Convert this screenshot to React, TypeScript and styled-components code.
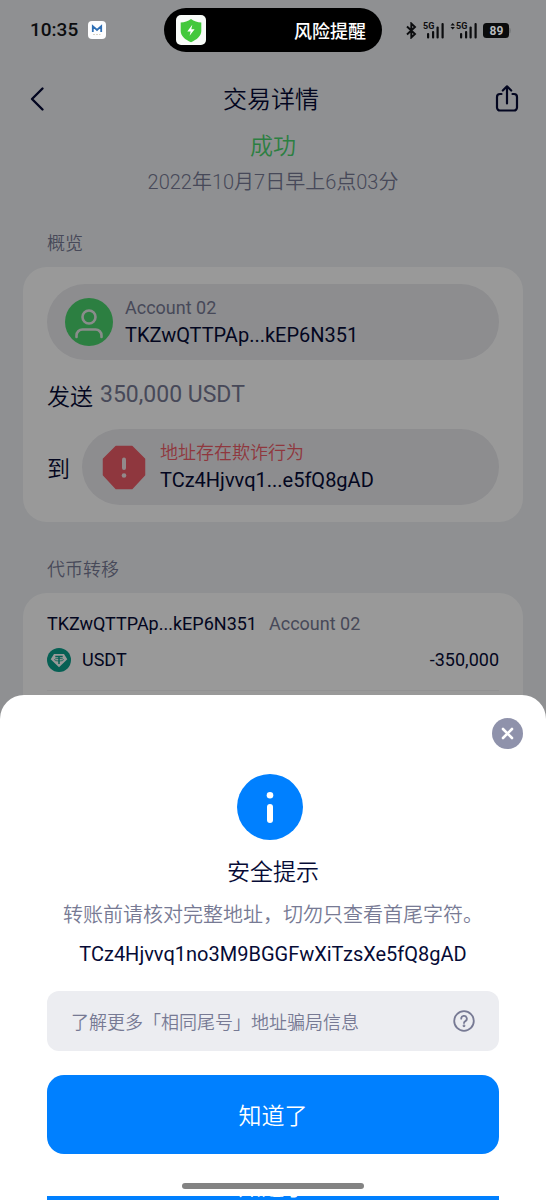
import React from "react";
import styled, { createGlobalStyle } from "styled-components";

const GlobalStyle = createGlobalStyle`
  * { box-sizing: border-box; }
  body {
    margin: 0;
    background: #eff1f4;
    color: #060b36;
    font-family: Roboto, "Noto Sans CJK SC", sans-serif;
    font-size: 18px;
  }
  button { font: inherit; color: inherit; border: 0; padding: 0; background: none; cursor: pointer; }
  h1, h2, p { margin: 0; font-weight: 400; }
  svg { display: block; flex: none; }
`;

const colors = {
  ink: "#060b36",
  muted: "#777a94",
  green: "#4ad46d",
  red: "#ef5d68",
  blue: "#0080ff",
  pill: "#ebebef",
};

const Page = styled.div`
  position: relative;
  height: 100vh;
  overflow: hidden;
`;

const StatusBar = styled.div`
  position: relative;
  z-index: 2;
  height: 60px;
  padding: 0 30px;
  display: grid;
  grid-template-columns: 1fr 218px 1fr;
  align-items: center;
  color: #0c0d0f;
`;

const StatusSide = styled.div<{ $end?: boolean }>`
  display: flex;
  align-items: center;
  justify-content: ${(p) => (p.$end ? "flex-end" : "flex-start")};
  gap: ${(p) => (p.$end ? 6 : 10)}px;
  padding-right: ${(p) => (p.$end ? 5 : 0)}px;
`;

const Clock = styled.span`
  font-size: 19px;
  font-weight: 500;
  line-height: 24px;
`;

const Island = styled.div`
  height: 44px;
  padding: 0 16px 0 12px;
  border-radius: 22px;
  background: #000;
  color: #fff;
  display: flex;
  align-items: center;
  justify-content: space-between;
  font-weight: 500;
`;

const Header = styled.header`
  height: 70px;
  padding: 0 24px;
  display: flex;
  align-items: center;
  justify-content: space-between;
  margin-top: 4px;
`;

const HeaderTitle = styled.h1`
  padding-top: 2px;
  font-size: 24px;
  font-weight: 350;
  line-height: 32px;
`;

const Summary = styled.div`
  display: flex;
  flex-direction: column;
  align-items: center;
`;

const Status = styled.p`
  font-size: 23px;
  font-weight: 350;
  line-height: 26px;
  color: ${colors.green};
`;

const Timestamp = styled.p`
  margin-top: 8px;
  font-size: 20px;
  font-weight: 350;
  line-height: 28px;
  color: ${colors.muted};
`;

const Section = styled.section`
  padding: 0 23px;
  margin-top: 35px;
`;

const SectionLabel = styled.h2`
  padding: 0 24px;
  font-size: 18px;
  font-weight: 350;
  line-height: 26px;
  color: ${colors.muted};
`;

const Card = styled.div<{ $continues?: boolean }>`
  margin-top: 10px;
  padding: 17px 24px ${(p) => (p.$continues ? 80 : 17)}px;
  border-radius: 24px;
  background: #fff;
`;

const AccountPill = styled.div`
  flex: 1;
  height: 76px;
  padding: 0 18px;
  border-radius: 38px;
  background: ${colors.pill};
  display: flex;
  align-items: center;
  gap: 12px;
`;

const AccountName = styled.div<{ $alert?: boolean }>`
  font-size: 18px;
  font-weight: ${(p) => (p.$alert ? 350 : 400)};
  line-height: 26px;
  color: ${(p) => (p.$alert ? colors.red : colors.muted)};
`;

const AccountAddress = styled.div`
  font-size: 20px;
  line-height: 28px;
`;

const AmountLine = styled.div`
  height: 69px;
  display: flex;
  align-items: center;
  gap: 7px;
  font-size: 23px;
`;

const Label = styled.span`
  font-weight: 350;
`;

const Amount = styled.span`
  color: ${colors.muted};
`;

const RecipientLine = styled.div`
  display: flex;
  align-items: center;
  gap: 12px;
  font-size: 23px;
`;

const TransferOwner = styled.div`
  display: flex;
  gap: 12px;
  line-height: 28px;
`;

const TransferRow = styled.div`
  margin-top: 10px;
  padding-bottom: 18px;
  border-bottom: 1px solid #f3f4f6;
  display: flex;
  align-items: center;
  gap: 11px;
  line-height: 24px;
`;

const TransferAmount = styled.span`
  margin-left: auto;
`;

const Backdrop = styled.div`
  position: absolute;
  inset: 0;
  z-index: 1;
  background: rgba(0, 0, 0, 0.4);
  display: flex;
  flex-direction: column;
  justify-content: flex-end;
`;

const Sheet = styled.div`
  padding: 23px 47px 0;
  border-radius: 24px 24px 0 0;
  background: #fff;
  display: flex;
  flex-direction: column;
  align-items: center;
`;

const CloseButton = styled.button`
  align-self: flex-end;
  margin-right: -24px;
  width: 31px;
  height: 31px;
  border-radius: 50%;
  background: #8f92ab;
  display: grid;
  place-items: center;
`;

const SheetIcon = styled.div`
  margin-top: 25px;
`;

const SheetTitle = styled.h2`
  margin-top: 17px;
  font-size: 23px;
  font-weight: 350;
  line-height: 32px;
`;

const SheetText = styled.p`
  margin-top: 12px;
  font-size: 20px;
  font-weight: 350;
  line-height: 28px;
  white-space: nowrap;
  color: ${colors.muted};
`;

const FullAddress = styled.p`
  margin-top: 11px;
  font-size: 20px;
  line-height: 28px;
`;

const LearnMore = styled.a`
  align-self: stretch;
  height: 60px;
  margin-top: 23px;
  padding: 0 24px;
  border-radius: 12px;
  background: #ecedf1;
  color: ${colors.muted};
  font-weight: 350;
  text-decoration: none;
  display: flex;
  align-items: center;
  justify-content: space-between;
`;

const ConfirmButton = styled.button`
  align-self: stretch;
  height: 79px;
  margin-top: 24px;
  padding-bottom: 2px;
  border-radius: 17px;
  background: ${colors.blue};
  color: #fff;
  font-size: 23px;
  font-weight: 350;
`;

const HomeIndicator = styled.div`
  width: 182px;
  height: 6px;
  margin-top: 29px;
  border-radius: 3px;
  background: #838383;
`;

const NextButton = styled.button`
  align-self: stretch;
  height: 4px;
  margin-top: 7px;
  overflow: hidden;
  background: ${colors.blue};
  color: #fff;
  font-size: 23px;
  font-weight: 350;
  line-height: 24px;
  display: flex;
  align-items: flex-end;
  justify-content: center;
`;

const MailIcon = () => (
  <svg width="18" height="18" viewBox="0 0 18 18" aria-hidden="true">
    <rect width="18" height="18" rx="4" fill="#fdfdfe" />
    <path d="M4.800 11V5.200L9 9l4.200-3.800V11" fill="none" stroke="#2f6fb5" strokeWidth="1.800" />
    <path d="M5 13.500h2M8 13.500h2M11 13.500h1.500" stroke="#d8d2c4" strokeWidth="1" />
  </svg>
);

const ShieldIcon = () => (
  <svg width="30" height="30" viewBox="0 0 30 30" aria-hidden="true">
    <rect width="30" height="30" rx="5" fill="#f8fbf8" />
    <path d="M15 4c3 2.300 6.500 3.300 10.300 3.500v8.500c0 5-4.500 8.700-10.300 11.200C9.200 24.700 4.700 21 4.700 16V7.500C8.500 7.300 12 6.300 15 4z" fill="#43c83c" />
    <path d="M16.300 9.800l-5 6.600h3.300l-1 4.300 5-6.500h-3.300z" fill="#fff" />
  </svg>
);

const BluetoothIcon = () => (
  <svg width="11" height="17" viewBox="0 0 11 17" fill="none" stroke="currentColor" strokeWidth="1.900" aria-hidden="true">
    <path d="M1 4.500l8 7.500-3.700 3.500V1.500L9 5l-8 7.500" />
  </svg>
);

const SignalIcon = ({ arrows }: { arrows?: boolean }) => (
  <svg width={arrows ? 27 : 21} height="17" viewBox={arrows ? "-6 0 27 17" : "0 0 21 17"} fill="currentColor" aria-hidden="true">
    {arrows && <path d="M-5.500 3.600L-3.300 1l2.200 2.600zM-5.500 5L-3.300 7.600-1.100 5z" />}
    <text x="0" y="7" fontSize="9" fontWeight="700" fontFamily="Roboto, sans-serif">5G</text>
    <rect x="4" y="11" width="2.200" height="5.500" rx="1" />
    <rect x="9" y="9" width="2.200" height="7.500" rx="1" />
    <rect x="13.500" y="4.500" width="2.200" height="12" rx="1" />
    <rect x="18.500" y="1" width="2.200" height="15.500" rx="1" />
  </svg>
);

const BatteryIcon = () => (
  <svg width="28" height="15" viewBox="0 0 28 15" aria-hidden="true">
    <rect width="26" height="15" rx="3.500" fill="#0a0b0c" />
    <path d="M26 4.500q2 .5 2 3t-2 3z" fill="#77797b" />
    <text x="13.500" y="11.500" textAnchor="middle" fontSize="12" fontWeight="700" fontFamily="Roboto, sans-serif" fill="#b9bbbd">89</text>
  </svg>
);

const BackIcon = () => (
  <svg width="26" height="26" viewBox="0 0 26 26" fill="none" stroke={colors.ink} strokeWidth="2.400" strokeLinecap="round" strokeLinejoin="round" aria-hidden="true">
    <path d="M18.500 2.500L8 13l10.500 10.500" />
  </svg>
);

const ShareIcon = () => (
  <svg width="30" height="30" viewBox="0 0 30 30" fill="none" stroke={colors.ink} strokeWidth="2.200" strokeLinecap="round" strokeLinejoin="round" aria-hidden="true">
    <path d="M9.500 10H8a3 3 0 0 0-3 3v10.500a3 3 0 0 0 3 3h14a3 3 0 0 0 3-3V13a3 3 0 0 0-3-3h-1.500M15 19.500V2.500M10.800 6.500L15 2.300l4.200 4.200" />
  </svg>
);

const UserIcon = () => (
  <svg width="48" height="48" viewBox="0 0 48 48" fill="none" aria-hidden="true">
    <circle cx="24" cy="24" r="24" fill={colors.green} />
    <circle cx="24" cy="19" r="6.500" stroke="#e6eae8" strokeWidth="2.600" />
    <path d="M11.500 39v-1.500a6 6 0 0 1 6-6h13a6 6 0 0 1 6 6V39" stroke="#e6eae8" strokeWidth="2.600" strokeLinecap="round" />
  </svg>
);

const AlertIcon = () => (
  <svg width="48" height="48" viewBox="0 0 48 48" aria-hidden="true">
    <path d="M16 3.500h16L44.500 16v16L32 45.500H16L3.500 32V16z" fill={colors.red} stroke={colors.red} strokeWidth="1.500" strokeLinejoin="round" />
    <rect x="22" y="14.500" width="4" height="12.500" rx="2" fill="#f3e6e8" />
    <circle cx="24" cy="32.500" r="2.300" fill="#f3e6e8" />
  </svg>
);

const TetherIcon = () => (
  <svg width="24" height="24" viewBox="0 0 24 24" fill="none" aria-hidden="true">
    <circle cx="12" cy="12" r="12" fill="#0aa08c" />
    <path d="M7 6h10l3.300 5.300L12 19.300l-8.300-8z" fill="#fff" />
    <path d="M8.300 8.500h7.400M12 8.500v7.500" stroke="#0aa08c" strokeWidth="1.500" />
    <ellipse cx="12" cy="11.700" rx="4.500" ry="1.300" stroke="#0aa08c" strokeWidth=".8" />
  </svg>
);

const CloseIcon = () => (
  <svg width="13" height="13" viewBox="0 0 13 13" stroke="#fff" strokeWidth="2.600" strokeLinecap="round" aria-hidden="true">
    <path d="M2 2l9 9M11 2l-9 9" />
  </svg>
);

const InfoIcon = () => (
  <svg width="72" height="66" viewBox="0 0 72 66" aria-hidden="true">
    <circle cx="33" cy="33" r="33" fill={colors.blue} />
    <circle cx="33" cy="21.300" r="3.300" fill="#fff" />
    <rect x="30" y="30" width="6" height="19" rx="3" fill="#fff" />
  </svg>
);

const HelpIcon = () => (
  <svg width="22" height="22" viewBox="0 0 22 22" fill="none" stroke={colors.muted} strokeWidth="1.800" strokeLinecap="round" strokeLinejoin="round" aria-hidden="true">
    <circle cx="11" cy="11" r="9.800" />
    <path d="M8.200 8.700a2.800 2.800 0 1 1 4.200 2.400c-1 .6-1.400 1-1.400 1.900" />
    <circle cx="11" cy="15.800" r=".5" />
  </svg>
);

export default function App() {
  return (
    <Page>
      <GlobalStyle />
      <StatusBar>
        <StatusSide>
          <Clock>10:35</Clock>
          <MailIcon />
        </StatusSide>
        <Island>
          <ShieldIcon />
          <span>风险提醒</span>
        </Island>
        <StatusSide $end>
          <BluetoothIcon />
          <SignalIcon />
          <SignalIcon arrows />
          <BatteryIcon />
        </StatusSide>
      </StatusBar>

      <Header>
        <button aria-label="返回"><BackIcon /></button>
        <HeaderTitle>交易详情</HeaderTitle>
        <button aria-label="分享"><ShareIcon /></button>
      </Header>

      <main>
        <Summary>
          <Status>成功</Status>
          <Timestamp>2022年10月7日早上6点03分</Timestamp>
        </Summary>

        <Section>
          <SectionLabel>概览</SectionLabel>
          <Card>
            <AccountPill>
              <UserIcon />
              <div>
                <AccountName>Account 02</AccountName>
                <AccountAddress>TKZwQTTPAp...kEP6N351</AccountAddress>
              </div>
            </AccountPill>
            <AmountLine>
              <Label>发送</Label>
              <Amount>350,000 USDT</Amount>
            </AmountLine>
            <RecipientLine>
              <Label>到</Label>
              <AccountPill>
                <AlertIcon />
                <div>
                  <AccountName $alert>地址存在欺诈行为</AccountName>
                  <AccountAddress>TCz4Hjvvq1...e5fQ8gAD</AccountAddress>
                </div>
              </AccountPill>
            </RecipientLine>
          </Card>
        </Section>

        <Section>
          <SectionLabel>代币转移</SectionLabel>
          <Card $continues>
            <TransferOwner>
              <span>TKZwQTTPAp...kEP6N351</span>
              <Amount>Account 02</Amount>
            </TransferOwner>
            <TransferRow>
              <TetherIcon />
              <span>USDT</span>
              <TransferAmount>-350,000</TransferAmount>
            </TransferRow>
          </Card>
        </Section>
      </main>

      <Backdrop>
        <Sheet role="dialog" aria-modal="true" aria-labelledby="notice-title">
          <CloseButton aria-label="关闭"><CloseIcon /></CloseButton>
          <SheetIcon><InfoIcon /></SheetIcon>
          <SheetTitle id="notice-title">安全提示</SheetTitle>
          <SheetText>转账前请核对完整地址，切勿只查看首尾字符。</SheetText>
          <FullAddress>TCz4Hjvvq1no3M9BGGFwXiTzsXe5fQ8gAD</FullAddress>
          <LearnMore href="#learn-more">
            <span>了解更多「相同尾号」地址骗局信息</span>
            <HelpIcon />
          </LearnMore>
          <ConfirmButton>知道了</ConfirmButton>
          <HomeIndicator />
          <NextButton>知道了</NextButton>
        </Sheet>
      </Backdrop>
    </Page>
  );
}
